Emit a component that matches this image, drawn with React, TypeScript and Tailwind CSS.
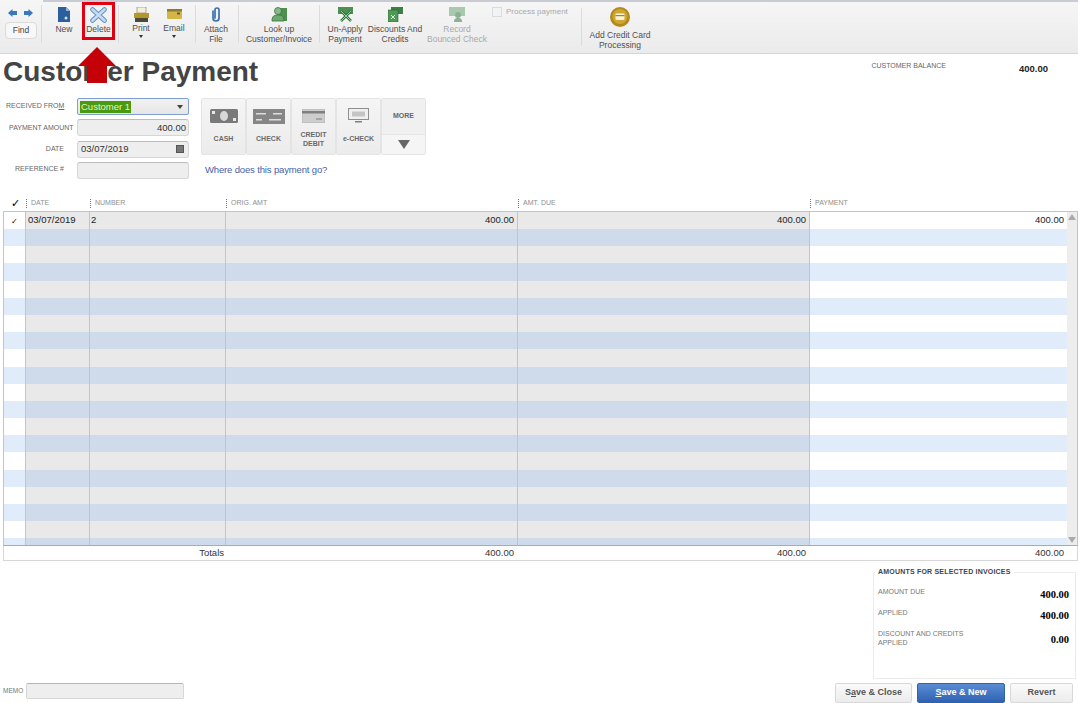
import type { ReactNode } from "react";

const sans = "font-['Liberation_Sans',Arial,sans-serif]";

const rowClasses = [
  ["bg-white", "bg-[#e9e9e9]", "bg-white"],
  ["bg-[#e1ecfb]", "bg-[#cfdbea]", "bg-[#e1ecfb]"],
];

const Sep = ({ cls }: { cls: string }) => <div className={`w-px bg-[#dcdcdc] shrink-0 ${cls}`} />;

const ToolLabel = ({ children, dim }: { children: ReactNode; dim?: boolean }) => (
  <div className={`text-[8.5px] leading-[10px] whitespace-nowrap text-center ${dim ? "text-[#a9a9a9]" : "text-[#4f4f4f]"}`}>{children}</div>
);

const Caret = () => <div className="mt-[2px] w-0 h-0 border-x-[2.5px] border-x-transparent border-t-[3px] border-t-[#333]" />;

const Toolbar = () => (
  <div className="relative h-[54px] border-b border-[#d6d6d6] bg-gradient-to-b from-[#f6f6f6] to-[#ebebeb] flex items-start pt-[2px]">
    <div className="absolute left-[43px] right-0 top-0 h-[2px] bg-[#c8ccd2]" />
    <div className="w-[37px] ml-[4px] shrink-0">
      <div className="flex gap-[7px] mt-[7px] ml-[4px]">
        <svg width="9" height="8" viewBox="0 0 9 8"><path d="M0 4 4.500 0v2H9v4H4.500v2z" fill="#3a78bd" /></svg>
        <svg width="9" height="8" viewBox="0 0 9 8"><path d="M9 4 4.500 0v2H0v4h4.500v2z" fill="#3a78bd" /></svg>
      </div>
      <div className="mt-[5px] w-[32px] h-[17px] ml-[1px] rounded-sm border border-[#dadada] bg-[#f7f7f7] flex items-center justify-center text-[8.5px] text-[#444]">Find</div>
    </div>
    <Sep cls="mt-[3px] h-[38px]" />
    <div className="w-[40px] pl-[4px] flex flex-col items-center pt-[5px] shrink-0">
      <svg width="12" height="15" viewBox="0 0 12 15">
        <path d="M0 0h8l4 4v11H0z" fill="#2c5f9e" />
        <path d="M8 0l4 4H8z" fill="#8fb3dc" />
        <circle cx="8" cy="11" r="1.500" fill="#cfe0f4" />
      </svg>
      <div className="mt-[2px]"><ToolLabel>New</ToolLabel></div>
    </div>
    <div className="w-[33px] h-[38px] border-[3px] border-[#e00012] flex flex-col items-center shrink-0">
      <svg width="17" height="16" viewBox="0 0 17 16" className="mt-[2px] shrink-0">
        <path d="M2.500 2.500 14.500 13.500M14.500 2.500 2.500 13.500" stroke="#5b8ec9" strokeWidth="4.600" strokeLinecap="round" />
        <path d="M2.500 2.500 14.500 13.500M14.500 2.500 2.500 13.500" stroke="#c6dbf1" strokeWidth="2.800" strokeLinecap="round" />
      </svg>
      <div className="mt-[1px]"><ToolLabel>Delete</ToolLabel></div>
    </div>
    <Sep cls="ml-[3px] mt-[3px] h-[38px]" />
    <div className="w-[36px] ml-[4px] flex flex-col items-center pt-[5px] shrink-0">
      <svg width="15" height="15" viewBox="0 0 15 15">
        <rect x="3" y="0" width="9" height="6" fill="#f4efd9" stroke="#8a7a3c" strokeWidth=".6" />
        <rect x="0" y="6" width="15" height="5" fill="#b3962f" />
        <rect x="1" y="11" width="13" height="4" fill="#4a4a3a" />
      </svg>
      <div className="mt-[1px]"><ToolLabel>Print</ToolLabel></div>
      <Caret />
    </div>
    <div className="w-[30px] flex flex-col items-center pt-[7px] shrink-0">
      <svg width="15" height="10" viewBox="0 0 15 10">
        <rect x="0" y="0" width="15" height="10" rx="1" fill="#d4b548" />
        <rect x="0" y="0" width="15" height="2.500" fill="#8f7a2c" />
        <rect x="10" y="3.500" width="3" height="2" fill="#5c5c3a" />
      </svg>
      <div className="mt-[4px]"><ToolLabel>Email</ToolLabel></div>
      <Caret />
    </div>
    <Sep cls="ml-[6px] mt-[3px] h-[38px]" />
    <div className="w-[40px] mr-[2px] flex flex-col items-center pt-[5px] shrink-0">
      <svg width="10" height="15" viewBox="0 0 10 15" fill="none">
        <path d="M2 4v7a3 3 0 0 0 6 0V3a2 2 0 0 0-4 0v8" stroke="#3a6fb0" strokeWidth="1.700" strokeLinecap="round" />
      </svg>
      <div className="mt-[2px]"><ToolLabel>Attach<br />File</ToolLabel></div>
    </div>
    <Sep cls="mt-[3px] h-[38px]" />
    <div className="w-[80px] flex flex-col items-center pt-[5px] shrink-0">
      <svg width="16" height="15" viewBox="0 0 16 15">
        <rect x="8" y="1" width="8" height="13" fill="#4d9150" />
        <circle cx="7" cy="4" r="3.500" fill="#8ab98a" stroke="#35703a" strokeWidth=".8" />
        <path d="M1 14c0-5 2-6 6-6s6 1 6 6z" fill="#6da870" stroke="#35703a" strokeWidth=".8" />
      </svg>
      <div className="mt-[2px]"><ToolLabel>Look up<br />Customer/Invoice</ToolLabel></div>
    </div>
    <Sep cls="mt-[3px] h-[38px]" />
    <div className="w-[50px] flex flex-col items-center pt-[5px] shrink-0">
      <svg width="15" height="15" viewBox="0 0 15 15">
        <rect x="0" y="0" width="15" height="7" fill="#4f8f52" />
        <path d="M3 4 13 14M13 4 3 14" stroke="#2f7a3c" strokeWidth="2.500" />
        <path d="M3 4 13 14M13 4 3 14" stroke="#cfe5d0" strokeWidth=".7" />
      </svg>
      <div className="mt-[2px]"><ToolLabel>Un-Apply<br />Payment</ToolLabel></div>
    </div>
    <div className="w-[50px] flex flex-col items-center pt-[5px] shrink-0">
      <svg width="15" height="15" viewBox="0 0 15 15">
        <rect x="3" y="0" width="12" height="7" fill="#3d7f45" />
        <rect x="0" y="3" width="10" height="12" fill="#4f9a56" stroke="#2c6a34" strokeWidth=".6" />
        <path d="M3 8l4 4M7 8l-4 4" stroke="#d8ecd9" strokeWidth="1" />
      </svg>
      <div className="mt-[2px]"><ToolLabel>Discounts And<br />Credits</ToolLabel></div>
    </div>
    <div className="w-[70px] ml-[2px] flex flex-col items-center pt-[5px] shrink-0">
      <svg width="16" height="15" viewBox="0 0 16 15">
        <rect x="0" y="0" width="16" height="9" fill="#a9c9ae" />
        <circle cx="9" cy="8" r="3" fill="#8cb295" />
        <path d="M5 15c0-3 1-4 4-4s4 1 4 4z" fill="#8cb295" />
      </svg>
      <div className="mt-[2px]"><ToolLabel dim>Record<br />Bounced Check</ToolLabel></div>
    </div>
    <div className="flex items-start pt-[5px] w-[89px] shrink-0">
      <div className="w-[10px] h-[10px] border border-[#d8dce2] bg-[#f2f3f5] shrink-0" />
      <div className="text-[8px] leading-[10px] ml-[4px] text-[#a9a9a9] whitespace-nowrap">Process payment</div>
    </div>
    <Sep cls="mt-[6px] h-[38px]" />
    <div className="w-[76px] flex flex-col items-center pt-[5px] shrink-0">
      <svg width="20" height="20" viewBox="0 0 20 20">
        <circle cx="10" cy="10" r="10" fill="#b28a1c" />
        <circle cx="10" cy="9.500" r="7.500" fill="#cfa62f" />
        <rect x="5.500" y="6.500" width="9" height="6.500" rx="1" fill="#fbf3d4" />
        <rect x="5.500" y="8" width="9" height="1.200" fill="#a8821c" />
      </svg>
      <div className="mt-[3px]"><ToolLabel>Add Credit Card<br />Processing</ToolLabel></div>
    </div>
    {/* red arrow over the heading */}
    <svg width="40" height="37" viewBox="0 0 40 37" className="absolute left-[77px] top-[46px] z-10">
      <path d="M20 1 39 20H30V37H10V20H1z" fill="#c40008" />
    </svg>
  </div>
);

const PayButton = ({ icon, label, w }: { icon: ReactNode; label: ReactNode; w: string }) => (
  <div className={`${w} h-[57px] rounded-[2px] border border-[#e4e4e4] bg-gradient-to-b from-[#f5f5f5] to-[#ececec] flex flex-col items-center`}>
    <div className="h-[24px] mt-[5px] flex items-center">{icon}</div>
    <div className="h-[21px] flex items-center text-[7px] leading-[9px] font-bold text-[#6a6a6a] text-center">{label}</div>
  </div>
);

const fieldBox = "w-[112px] h-[17px] rounded-[3px] border border-[#d6d6d6] border-t-[#bcbcbc] bg-[#eeeeee]";

const Form = () => (
  <div className="flex h-[96px] pl-[6px]">
    <div className="w-[189px] flex flex-col gap-[4.400px]">
      <div className="flex items-center h-[17px]">
        <div className="w-[71px] text-[7px] text-[#666] whitespace-nowrap">RECEIVED FRO<span className="underline">M</span></div>
        <div className="w-[112px] h-[17px] rounded-[2px] border border-[#7e9fd0] bg-gradient-to-b from-[#f2f2f2] to-[#e6e6e6] flex items-center pl-[2px] pr-[5px] text-[9.500px]">
          <span className="bg-[#4a9a10] text-[#e4f2c8] px-[1px] leading-[12px]">Customer 1</span>
          <div className="ml-auto w-0 h-0 border-x-[3.500px] border-x-transparent border-t-[4px] border-t-[#444]" />
        </div>
      </div>
      <div className="flex items-center h-[17px]">
        <div className="w-[71px] text-[7px] text-[#666] pl-[3px] whitespace-nowrap">PAYMENT AMOUNT</div>
        <div className={`${fieldBox} flex items-center justify-end px-[2px] text-[9.500px] text-[#333]`}>400.00</div>
      </div>
      <div className="flex items-center h-[17px]">
        <div className="w-[58px] mr-[13px] text-[7px] text-[#666] text-right">DATE</div>
        <div className={`${fieldBox} flex items-center px-[3px] text-[9.500px] text-[#333]`}>
          03/07/2019
          <div className="ml-auto w-[8px] h-[8px] bg-[#777] border border-[#555] mr-[1px]" />
        </div>
      </div>
      <div className="flex items-center h-[17px]">
        <div className="w-[58px] mr-[13px] text-[7px] text-[#666] text-right pb-[3px] whitespace-nowrap">REFERENCE #</div>
        <div className={fieldBox} />
      </div>
    </div>
    <div className="ml-[6px]">
      <div className="flex">
        <PayButton w="w-[45px]" label="CASH" icon={
          <svg width="28" height="14" viewBox="0 0 28 14">
            <rect width="28" height="14" rx="1.500" fill="#7a7a7a" />
            <ellipse cx="14" cy="7" rx="4" ry="5" fill="#d8d8d8" />
            <rect x="2" y="2" width="3" height="3" fill="#e8e8e8" />
            <rect x="23" y="9" width="3" height="3" fill="#e8e8e8" />
          </svg>
        } />
        <PayButton w="w-[45px]" label="CHECK" icon={
          <svg width="32" height="15" viewBox="0 0 32 15">
            <rect width="32" height="15" fill="#868686" />
            <rect x="3" y="4" width="10" height="1.500" fill="#ddd" />
            <rect x="20" y="4" width="9" height="1.500" fill="#ddd" />
            <rect x="3" y="10" width="6" height="1.500" fill="#ddd" />
            <rect x="16" y="10" width="12" height="1.500" fill="#ddd" />
          </svg>
        } />
        <PayButton w="w-[45px]" label={<>CREDIT<br />DEBIT</>} icon={
          <svg width="23" height="14" viewBox="0 0 23 14">
            <rect width="23" height="14" rx="1" fill="#cdcdcd" stroke="#9a9a9a" strokeWidth=".5" />
            <rect y="2" width="23" height="2.500" fill="#808080" />
            <rect x="14" y="9" width="6" height="2" fill="#a4a4a4" />
          </svg>
        } />
        <PayButton w="w-[45px]" label="e-CHECK" icon={
          <svg width="21" height="16" viewBox="0 0 21 16">
            <rect x=".5" y=".5" width="20" height="11" fill="#f0f0f0" stroke="#8e8e8e" />
            <rect x="4" y="3.500" width="13" height="5" fill="#c4c4c4" />
            <rect x="7" y="13" width="7" height="1.500" fill="#7e7e7e" />
          </svg>
        } />
        <div className="w-[45px] h-[57px] rounded-[2px] border border-[#e4e4e4] flex flex-col">
          <div className="h-[35px] bg-[#f0f0f0] flex items-center justify-center text-[7px] font-bold text-[#666]">MORE</div>
          <div className="flex-1 bg-[#f5f5f5] border-t border-[#e6e6e6] flex items-center justify-center">
            <div className="w-0 h-0 border-x-[6px] border-x-transparent border-t-[9px] border-t-[#666]" />
          </div>
        </div>
      </div>
      <div className="mt-[9px] ml-[4px] text-[9.500px] leading-[12px] tracking-[-0.15px] text-[#3f62a8] whitespace-nowrap">Where does this payment go?</div>
    </div>
  </div>
);

const HeadCell = ({ w, label }: { w: string; label: string }) => (
  <div className={`${w} flex items-center text-[7px] text-[#8e8e8e]`}>
    <div className="h-[9px] border-l border-dotted border-[#777] mr-[4px]" />{label}
  </div>
);

const Grid = () => {
  const rows = Array.from({ length: 20 });
  const cell = "border-l border-[#c4c4c4] text-[9.500px] leading-[15px] text-[#222]";
  return (
    <div className="ml-[3px]">
      <div className="flex h-[17px] pl-[1px] pt-[2px]">
        <div className="w-[22px] flex items-center justify-center text-[11px] leading-none text-black">✓</div>
        <HeadCell w="w-[64px]" label="DATE" />
        <HeadCell w="w-[136px]" label="NUMBER" />
        <HeadCell w="w-[292px]" label="ORIG. AMT" />
        <HeadCell w="w-[292px]" label="AMT. DUE" />
        <HeadCell w="flex-1" label="PAYMENT" />
      </div>
      <div className="border border-[#c4c4c4] border-b-[#aaa] h-[335px] overflow-hidden flex">
        <div className="flex-1 overflow-hidden">
          {rows.map((_, i) => {
            const c = rowClasses[i % 2];
            const first = i === 0;
            return (
              <div key={i} className={`flex ${first ? "h-[17px]" : "h-[17.200px]"}`}>
                <div className={`w-[21px] ${c[0]} flex items-center justify-center text-[8px] pt-[3px] text-black`}>{first ? "✓" : ""}</div>
                <div className={`w-[64px] ${cell} ${c[1]} pl-[2px]`}>{first ? "03/07/2019" : ""}</div>
                <div className={`w-[136px] ${cell} ${c[1]} pl-[1px]`}>{first ? "2" : ""}</div>
                <div className={`w-[292px] ${cell} ${c[1]} pr-[3px] text-right`}>{first ? "400.00" : ""}</div>
                <div className={`w-[292px] ${cell} ${c[1]} pr-[3px] text-right`}>{first ? "400.00" : ""}</div>
                <div className={`flex-1 ${cell} ${c[2]} pr-[3px] text-right`}>{first ? "400.00" : ""}</div>
              </div>
            );
          })}
        </div>
        <div className="w-[10px] shrink-0 bg-[#ededed] flex flex-col justify-between items-center py-[2px]">
          <div className="w-0 h-0 border-x-[4px] border-x-transparent border-b-[6px] border-b-[#aaa]" />
          <div className="w-0 h-0 border-x-[4px] border-x-transparent border-t-[6px] border-t-[#aaa]" />
        </div>
      </div>
      <div className="flex h-[15px] border-x border-b border-[#d8d8d8] text-[9.500px] leading-[13px] text-[#333]">
        <div className="w-[221px] text-right pr-[1px]">Totals</div>
        <div className="w-[292px] text-right pr-[3px]">400.00</div>
        <div className="w-[292px] text-right pr-[3px]">400.00</div>
        <div className="flex-1 text-right pr-[13px]">400.00</div>
      </div>
    </div>
  );
};

const SummaryRow = ({ label, value, cls }: { label: ReactNode; value: string; cls: string }) => (
  <div className="flex justify-between h-[21px] items-start pr-[2px]">
    <div className="text-[7px] leading-[9px] text-[#777]">{label}</div>
    <div className={`text-[10.500px] leading-[12px] font-bold text-black font-['Liberation_Serif',serif] ${cls}`}>{value}</div>
  </div>
);

const Summary = () => (
  <div className="relative mt-[11px] ml-auto mr-[2px] w-[203px] h-[107px] border border-[#ececec] px-[4px] pt-[14px]">
    <div className="absolute top-[-7px] left-[1px] bg-white px-[3px] text-[7px] leading-[11px] font-bold text-[#444] tracking-[0.2px] whitespace-nowrap">AMOUNTS FOR SELECTED INVOICES</div>
    <SummaryRow cls="mt-[2px]" label="AMOUNT DUE" value="400.00" />
    <SummaryRow cls="mt-[2px]" label="APPLIED" value="400.00" />
    <SummaryRow cls="mt-[5px]" label={<>DISCOUNT AND CREDITS<br />APPLIED</>} value="0.00" />
  </div>
);

const Footer = () => (
  <div className="absolute left-[3px] right-[5px] bottom-0 h-[20px] flex items-start">
    <div className="text-[6.500px] leading-[16px] text-[#777] w-[23px]">MEMO</div>
    <div className="w-[158px] h-[16px] rounded-[2px] border border-[#d6d6d6] border-t-[#b5b5b5] bg-[#eeeeee]" />
    <div className="ml-auto flex gap-[5px]">
      <div className="w-[77px] h-[20px] rounded-[2px] border border-[#d8d8d8] bg-gradient-to-b from-[#fafafa] to-[#ececec] flex items-center justify-center text-[9px] font-bold text-[#555]"><span>S<span className="underline">a</span>ve &amp; Close</span></div>
      <div className="w-[88px] h-[20px] rounded-[2px] border border-[#2f62ad] bg-gradient-to-b from-[#5a8dd6] to-[#2f62b0] flex items-center justify-center text-[9px] font-bold text-white"><span><span className="underline">S</span>ave &amp; New</span></div>
      <div className="w-[63px] h-[20px] rounded-[2px] border border-[#d8d8d8] bg-gradient-to-b from-[#fafafa] to-[#ececec] flex items-center justify-center text-[9px] font-bold text-[#555]">Revert</div>
    </div>
  </div>
);

export default function App() {
  return (
    <div className={`relative w-[1078px] h-[703px] bg-white overflow-hidden ${sans}`}>
      <Toolbar />
      <div className="h-[44px] flex items-start justify-between pl-[3px]">
        <div className="text-[28px] leading-[34px] font-bold text-[#444] mt-[1px]">Customer Payment</div>
        <div className="flex mt-[7px] mr-[30px]">
          <div className="text-[7px] text-[#666] mr-[73px]">CUSTOMER BALANCE</div>
          <div className="text-[9.500px] font-bold text-[#222] mt-[1px]">400.00</div>
        </div>
      </div>
      <Form />
      <Grid />
      <Summary />
      <Footer />
    </div>
  );
}
